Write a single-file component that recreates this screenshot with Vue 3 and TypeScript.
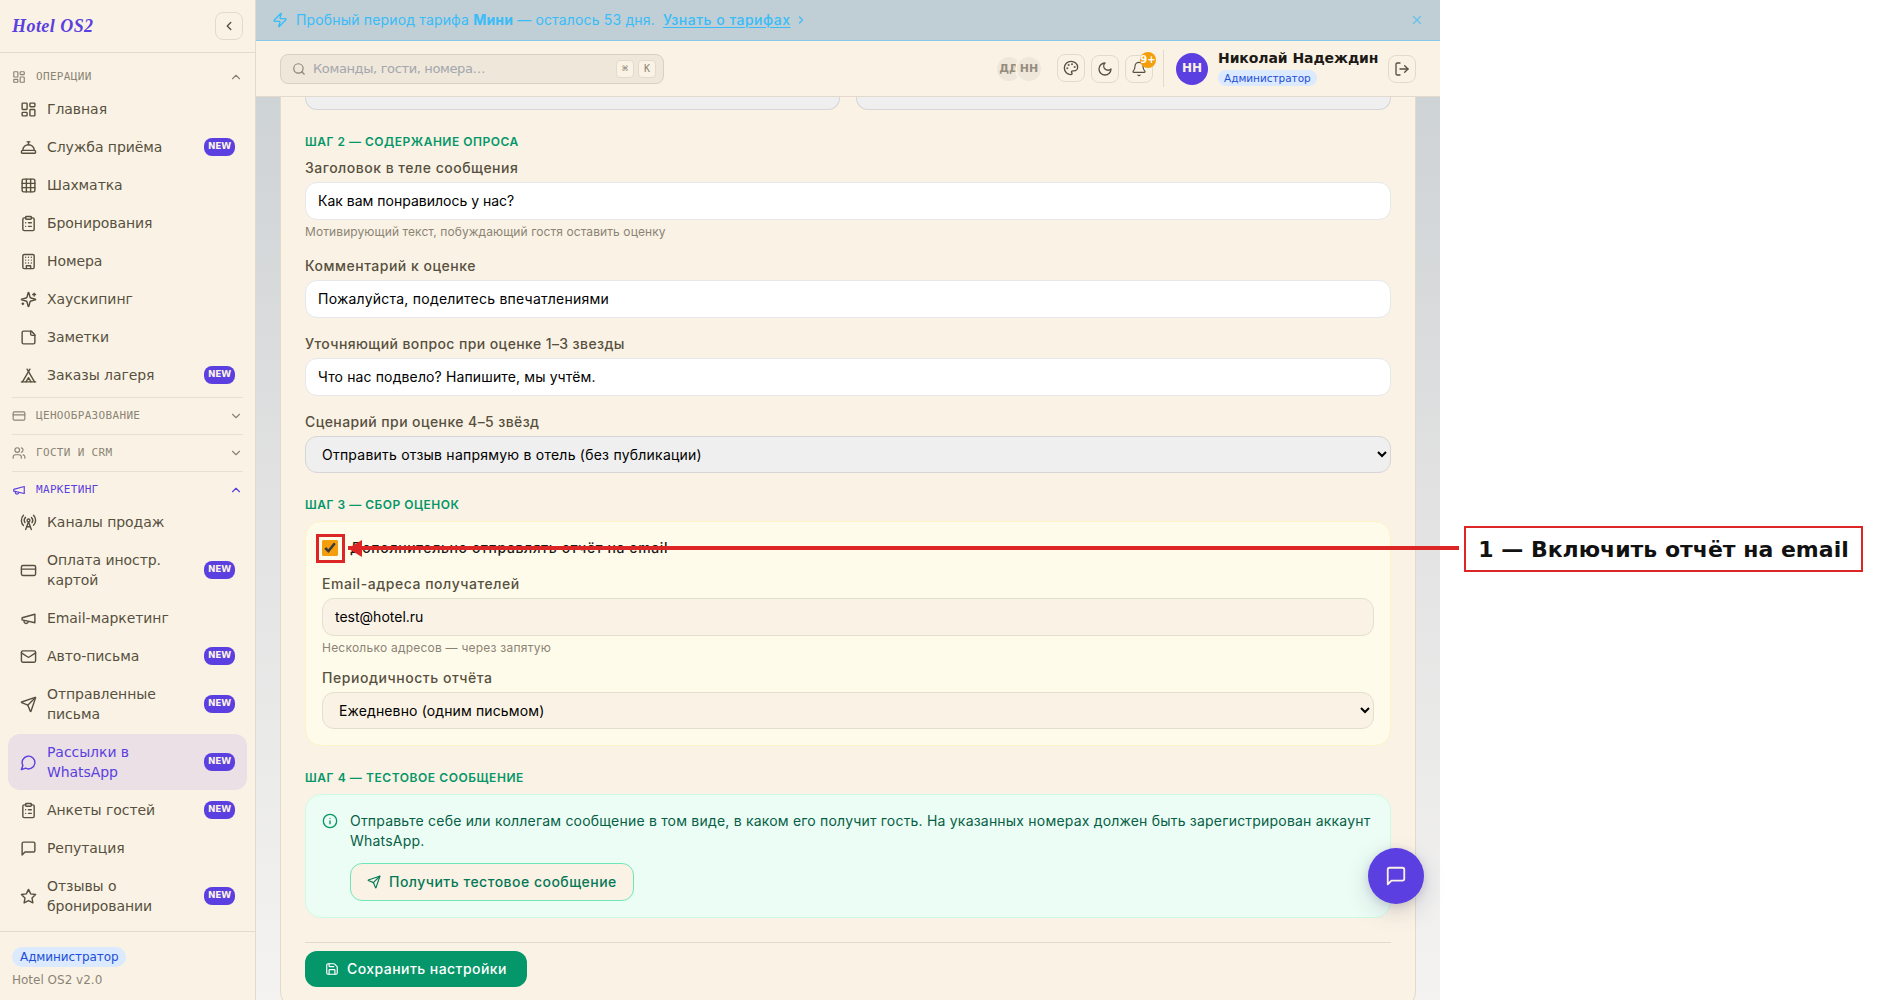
<script setup lang="ts">
import { ref } from 'vue'

interface NavItem {
  label: string
  icon: string
  isNew?: boolean
  active?: boolean
}
interface NavGroup {
  title: string
  icon: string
  open: boolean
  accent?: boolean
  items: NavItem[]
}

const icons: Record<string, string> = {
  dashboard:
    '<rect width="7" height="9" x="3" y="3" rx="1"/><rect width="7" height="5" x="14" y="3" rx="1"/><rect width="7" height="9" x="14" y="12" rx="1"/><rect width="7" height="5" x="3" y="16" rx="1"/>',
  bellDesk:
    '<path d="M3 20a1 1 0 0 1-1-1v-1a2 2 0 0 1 2-2h16a2 2 0 0 1 2 2v1a1 1 0 0 1-1 1Z"/><path d="M20 16a8 8 0 1 0-16 0"/><path d="M12 4v4"/><path d="M10 4h4"/>',
  grid:
    '<rect width="18" height="18" x="3" y="3" rx="2"/><path d="M3 9h18"/><path d="M3 15h18"/><path d="M9 3v18"/><path d="M15 3v18"/>',
  clipboard:
    '<rect width="8" height="4" x="8" y="2" rx="1" ry="1"/><path d="M16 4h2a2 2 0 0 1 2 2v14a2 2 0 0 1-2 2H6a2 2 0 0 1-2-2V6a2 2 0 0 1 2-2h2"/><path d="M12 11h4"/><path d="M12 16h4"/><path d="M8 11h.01"/><path d="M8 16h.01"/>',
  building:
    '<rect width="16" height="20" x="4" y="2" rx="2" ry="2"/><path d="M9 22v-4h6v4"/><path d="M8 6h.01"/><path d="M16 6h.01"/><path d="M12 6h.01"/><path d="M12 10h.01"/><path d="M12 14h.01"/><path d="M16 10h.01"/><path d="M16 14h.01"/><path d="M8 10h.01"/><path d="M8 14h.01"/>',
  sparkles:
    '<path d="M9.937 15.5A2 2 0 0 0 8.5 14.063l-6.135-1.582a.5.5 0 0 1 0-.962L8.5 9.936A2 2 0 0 0 9.937 8.5l1.582-6.135a.5.5 0 0 1 .963 0L14.063 8.5A2 2 0 0 0 15.5 9.937l6.135 1.581a.5.5 0 0 1 0 .964L15.5 14.063a2 2 0 0 0-1.437 1.437l-1.582 6.135a.5.5 0 0 1-.963 0z"/><path d="M20 3v4"/><path d="M22 5h-4"/><path d="M4 17v2"/><path d="M5 18H3"/>',
  note:
    '<path d="M16 3H5a2 2 0 0 0-2 2v14a2 2 0 0 0 2 2h14a2 2 0 0 0 2-2V8Z"/><path d="M15 3v4a2 2 0 0 0 2 2h4"/>',
  tent:
    '<path d="M3.5 21 14 3"/><path d="M20.5 21 10 3"/><path d="M15.5 21 12 15l-3.5 6"/><path d="M2 21h20"/>',
  card: '<rect width="20" height="14" x="2" y="5" rx="2"/><path d="M2 10h20"/>',
  users:
    '<path d="M16 21v-2a4 4 0 0 0-4-4H6a4 4 0 0 0-4 4v2"/><circle cx="9" cy="7" r="4"/><path d="M22 21v-2a4 4 0 0 0-3-3.87"/><path d="M16 3.13a4 4 0 0 1 0 7.75"/>',
  megaphone: '<path d="m3 11 18-5v12L3 14v-3z"/><path d="M11.6 16.8a3 3 0 1 1-5.8-1.6"/>',
  tower:
    '<path d="M4.9 16.1C1 12.2 1 5.8 4.9 1.9"/><path d="M7.8 4.7a6.14 6.14 0 0 0-.8 7.5"/><circle cx="12" cy="9" r="2"/><path d="M16.2 4.8c2 2 2.26 5.11.8 7.47"/><path d="M19.1 1.9a9.96 9.96 0 0 1 0 14.1"/><path d="M9.5 18h5"/><path d="m8 22 4-11 4 11"/>',
  mail: '<rect width="20" height="16" x="2" y="4" rx="2"/><path d="m22 7-8.97 5.7a1.94 1.94 0 0 1-2.06 0L2 7"/>',
  send: '<path d="M14.536 21.686a.5.5 0 0 0 .937-.024l6.5-19a.496.496 0 0 0-.635-.635l-19 6.5a.5.5 0 0 0-.024.937l7.93 3.18a2 2 0 0 1 1.112 1.11z"/><path d="m21.854 2.147-10.94 10.939"/>',
  bubble: '<path d="M7.9 20A9 9 0 1 0 4 16.1L2 22Z"/>',
  message: '<path d="M21 15a2 2 0 0 1-2 2H7l-4 4V5a2 2 0 0 1 2-2h14a2 2 0 0 1 2 2z"/>',
  star: '<path d="M12 2l3.09 6.26L22 9.27l-5 4.87 1.18 6.88L12 17.77l-6.18 3.25L7 14.14 2 9.27l6.91-1.01z"/>',
  up: '<path d="m18 15-6-6-6 6"/>',
  down: '<path d="m6 9 6 6 6-6"/>',
  left: '<path d="m15 18-6-6 6-6"/>',
  right: '<path d="m9 18 6-6-6-6"/>',
  zap: '<path d="M4 14a1 1 0 0 1-.78-1.63l9.9-10.2a.5.5 0 0 1 .86.46l-1.92 6.02A1 1 0 0 0 13 10h7a1 1 0 0 1 .78 1.63l-9.9 10.2a.5.5 0 0 1-.86-.46l1.92-6.02A1 1 0 0 0 11 14z"/>',
  close: '<path d="M18 6 6 18"/><path d="m6 6 12 12"/>',
  search: '<circle cx="11" cy="11" r="8"/><path d="m21 21-4.3-4.3"/>',
  palette:
    '<circle cx="13.5" cy="6.5" r=".5" fill="currentColor"/><circle cx="17.5" cy="10.5" r=".5" fill="currentColor"/><circle cx="8.5" cy="7.5" r=".5" fill="currentColor"/><circle cx="6.5" cy="12.5" r=".5" fill="currentColor"/><path d="M12 2C6.5 2 2 6.5 2 12s4.5 10 10 10c.926 0 1.648-.746 1.648-1.688 0-.437-.18-.835-.437-1.125-.29-.289-.438-.652-.438-1.125a1.64 1.64 0 0 1 1.668-1.668h1.996c3.051 0 5.555-2.503 5.555-5.554C21.965 6.012 17.461 2 12 2z"/>',
  moon: '<path d="M12 3a6 6 0 0 0 9 9 9 9 0 1 1-9-9Z"/>',
  bell: '<path d="M10.268 21a2 2 0 0 0 3.464 0"/><path d="M3.262 15.326A1 1 0 0 0 4 17h16a1 1 0 0 0 .74-1.673C19.41 13.956 18 12.499 18 8A6 6 0 0 0 6 8c0 4.499-1.411 5.956-2.738 7.326"/>',
  logout: '<path d="M9 21H5a2 2 0 0 1-2-2V5a2 2 0 0 1 2-2h4"/><path d="m16 17 5-5-5-5"/><path d="M21 12H9"/>',
  info: '<circle cx="12" cy="12" r="10"/><path d="M12 16v-4"/><path d="M12 8h.01"/>',
  save: '<path d="M15.2 3a2 2 0 0 1 1.4.6l3.8 3.8a2 2 0 0 1 .6 1.4V19a2 2 0 0 1-2 2H5a2 2 0 0 1-2-2V5a2 2 0 0 1 2-2z"/><path d="M17 21v-7a1 1 0 0 0-1-1H8a1 1 0 0 0-1 1v7"/><path d="M7 3v4a1 1 0 0 0 1 1h7"/>',
}

const groups: NavGroup[] = [
  {
    title: 'ОПЕРАЦИИ',
    icon: 'dashboard',
    open: true,
    items: [
      { label: 'Главная', icon: 'dashboard' },
      { label: 'Служба приёма', icon: 'bellDesk', isNew: true },
      { label: 'Шахматка', icon: 'grid' },
      { label: 'Бронирования', icon: 'clipboard' },
      { label: 'Номера', icon: 'building' },
      { label: 'Хаускипинг', icon: 'sparkles' },
      { label: 'Заметки', icon: 'note' },
      { label: 'Заказы лагеря', icon: 'tent', isNew: true },
    ],
  },
  { title: 'ЦЕНООБРАЗОВАНИЕ', icon: 'card', open: false, items: [] },
  { title: 'ГОСТИ И CRM', icon: 'users', open: false, items: [] },
  {
    title: 'МАРКЕТИНГ',
    icon: 'megaphone',
    open: true,
    accent: true,
    items: [
      { label: 'Каналы продаж', icon: 'tower' },
      { label: 'Оплата иностр. картой', icon: 'card', isNew: true },
      { label: 'Email-маркетинг', icon: 'megaphone' },
      { label: 'Авто-письма', icon: 'mail', isNew: true },
      { label: 'Отправленные письма', icon: 'send', isNew: true },
      { label: 'Рассылки в WhatsApp', icon: 'bubble', isNew: true, active: true },
      { label: 'Анкеты гостей', icon: 'clipboard', isNew: true },
      { label: 'Репутация', icon: 'message' },
      { label: 'Отзывы о бронировании', icon: 'star', isNew: true },
    ],
  },
]

const heading = ref('Как вам понравилось у нас?')
const comment = ref('Пожалуйста, поделитесь впечатлениями')
const question = ref('Что нас подвело? Напишите, мы учтём.')
const emails = ref('test@hotel.ru')
const sendReport = ref(true)
</script>

<template>
  <div class="page">
    <div class="app">
      <aside class="sidebar">
        <div class="brand">
          <span class="logo">Hotel OS2</span>
          <button class="icon-btn">
            <svg class="ic" width="14" height="14" viewBox="0 0 24 24" stroke-width="2.4" v-html="icons.left" />
          </button>
        </div>
        <nav class="nav">
          <section v-for="g in groups" :key="g.title" class="group" :class="{ closed: !g.open }">
            <div class="group-head" :class="{ accent: g.accent }">
              <svg class="ic" width="14" height="14" viewBox="0 0 24 24" stroke-width="2" v-html="icons[g.icon]" />
              <span class="group-title">{{ g.title }}</span>
              <svg class="ic" width="14" height="14" viewBox="0 0 24 24" stroke-width="2" v-html="g.open ? icons.up : icons.down" />
            </div>
            <a v-for="i in g.items" :key="i.label" class="item" :class="{ active: i.active }">
              <svg class="ic" width="17" height="17" viewBox="0 0 24 24" stroke-width="2" v-html="icons[i.icon]" />
              <span class="item-label">{{ i.label }}</span>
              <span v-if="i.isNew" class="new">NEW</span>
            </a>
          </section>
        </nav>
        <div class="side-foot">
          <span class="role-pill">Администратор</span>
          <span class="version">Hotel OS2 v2.0</span>
        </div>
      </aside>

      <div class="main">
        <div class="banner">
          <svg class="ic" width="16" height="16" viewBox="0 0 24 24" stroke-width="2" v-html="icons.zap" />
          <span class="banner-text">Пробный период тарифа <b>Мини</b> — осталось 53 дня.</span>
          <a class="banner-link">Узнать о тарифах</a>
          <svg class="ic banner-arrow" width="12" height="12" viewBox="0 0 24 24" stroke-width="2.4" v-html="icons.right" />
          <svg class="ic banner-close" width="14" height="14" viewBox="0 0 24 24" stroke-width="2" v-html="icons.close" />
        </div>

        <header class="topbar">
          <div class="search">
            <svg class="ic" width="14" height="14" viewBox="0 0 24 24" stroke-width="2" v-html="icons.search" />
            <span class="placeholder">Команды, гости, номера…</span>
            <kbd>⌘</kbd>
            <kbd>K</kbd>
          </div>
          <div class="presence">
            <span class="mini">ДД</span>
            <span class="mini">НН</span>
          </div>
          <button class="icon-btn raised">
            <svg class="ic" width="16" height="16" viewBox="0 0 24 24" stroke-width="2" v-html="icons.palette" />
          </button>
          <button class="icon-btn">
            <svg class="ic" width="16" height="16" viewBox="0 0 24 24" stroke-width="2" v-html="icons.moon" />
          </button>
          <button class="icon-btn bell">
            <svg class="ic" width="16" height="16" viewBox="0 0 24 24" stroke-width="1.75" v-html="icons.bell" />
            <span class="count">9+</span>
          </button>
          <span class="divider" />
          <span class="avatar">НН</span>
          <div class="who">
            <span class="name">Николай Надеждин</span>
            <span class="role-pill small">Администратор</span>
          </div>
          <button class="icon-btn">
            <svg class="ic" width="16" height="16" viewBox="0 0 24 24" stroke-width="2" v-html="icons.logout" />
          </button>
        </header>

        <div class="content">
          <div class="card">
            <div class="cut-row">
              <div class="cut" />
              <div class="cut" />
            </div>

            <h3>ШАГ 2 — СОДЕРЖАНИЕ ОПРОСА</h3>
            <div class="field">
              <label>Заголовок в теле сообщения</label>
              <input v-model="heading" type="text" />
              <p class="hint">Мотивирующий текст, побуждающий гостя оставить оценку</p>
            </div>
            <div class="field">
              <label>Комментарий к оценке</label>
              <input v-model="comment" type="text" class="airy" />
            </div>
            <div class="field">
              <label class="snug">Уточняющий вопрос при оценке 1–3 звезды</label>
              <input v-model="question" type="text" class="open" />
            </div>
            <div class="field">
              <label class="snug">Сценарий при оценке 4–5 звёзд</label>
              <select class="airy">
                <option>Отправить отзыв напрямую в отель (без публикации)</option>
              </select>
            </div>

            <h3>ШАГ 3 — СБОР ОЦЕНОК</h3>
            <div class="box yellow">
              <label class="check">
                <input v-model="sendReport" type="checkbox" />
                <span>Дополнительно отправлять отчёт на email</span>
              </label>
              <div class="field tight">
                <label class="wide">Email-адреса получателей</label>
                <input v-model="emails" type="text" class="cream" />
                <p class="hint airy">Несколько адресов — через запятую</p>
              </div>
              <div class="field">
                <label class="wide">Периодичность отчёта</label>
                <select class="cream open">
                  <option>Ежедневно (одним письмом)</option>
                </select>
              </div>
            </div>

            <h3 class="last">ШАГ 4 — ТЕСТОВОЕ СООБЩЕНИЕ</h3>
            <div class="box green">
              <svg class="ic info" width="16" height="16" viewBox="0 0 24 24" stroke-width="2" v-html="icons.info" />
              <div class="green-body">
                <p>
                  Отправьте себе или коллегам сообщение в том виде, в каком его получит гость. На указанных номерах
                  должен быть зарегистрирован аккаунт WhatsApp.
                </p>
                <button class="test-btn">
                  <svg class="ic" width="14" height="14" viewBox="0 0 24 24" stroke-width="2" v-html="icons.send" />
                  <span>Получить тестовое сообщение</span>
                </button>
              </div>
            </div>

            <div class="actions">
              <button class="save-btn">
                <svg class="ic" width="14" height="14" viewBox="0 0 24 24" stroke-width="2" v-html="icons.save" />
                <span>Сохранить настройки</span>
              </button>
            </div>
          </div>
        </div>
      </div>
    </div>

    <button class="fab">
      <svg class="ic" width="22" height="22" viewBox="0 0 24 24" stroke-width="2" v-html="icons.message" />
    </button>

    <div class="mark" />
    <svg class="arrow" width="1111" height="18" viewBox="0 0 1111 18">
      <rect x="0" y="6" width="1111" height="4" />
      <path d="M0 8.5 14 0v17z" />
    </svg>
    <div class="callout">1 — Включить отчёт на email</div>
  </div>
</template>

<style>
body {
  margin: 0;
  background: #fff;
}
</style>

<style scoped>
* {
  box-sizing: border-box;
}
.page {
  position: relative;
  width: 1886px;
  height: 1000px;
  overflow: hidden;
  background: #fff;
  font-family: 'DejaVu Sans', sans-serif;
  color: #1c1917;
}
.app {
  display: flex;
  width: 1440px;
  height: 1000px;
}
.ic {
  display: block;
  flex: none;
  fill: none;
  stroke: currentColor;
  stroke-linecap: round;
  stroke-linejoin: round;
}
button {
  font: inherit;
  padding: 0;
  margin: 0;
}

/* sidebar */
.sidebar {
  display: flex;
  flex-direction: column;
  width: 256px;
  flex: none;
  background: #faf3e5;
  border-right: 1px solid #e3dacd;
}
.brand {
  display: flex;
  align-items: center;
  justify-content: space-between;
  height: 53px;
  padding: 0 12px;
  border-bottom: 1px solid #e3dacd;
}
.logo {
  font: italic bold 18px/28px 'Liberation Serif', serif;
  letter-spacing: 0.45px;
  color: #5b3fe0;
}
.icon-btn {
  position: relative;
  display: flex;
  align-items: center;
  justify-content: center;
  width: 28px;
  height: 28px;
  flex: none;
  border: 1px solid #e3dacd;
  border-radius: 8px;
  background: transparent;
  color: #57503f;
}
.nav {
  flex: 1;
  padding-top: 6px;
}
.group {
  padding: 3px 0;
}
.group + .group::before {
  content: '';
  display: block;
  height: 1px;
  margin: -3px 12px 3px;
  background: #e9e0d3;
}
.group.closed {
  padding-bottom: 5px;
}
.group-head {
  display: flex;
  align-items: center;
  gap: 10px;
  height: 28px;
  padding: 1px 12px 0;
  color: #8b8475;
}
.group-head.accent {
  color: #5b3fe0;
}
.group-title {
  flex: 1;
  font: 11px/16px 'DejaVu Sans Mono', monospace;
  letter-spacing: 0.33px;
}
.item {
  display: flex;
  align-items: center;
  gap: 10px;
  margin: 1px 8px;
  padding: 8px 12px;
  border-radius: 12px;
  color: #57503f;
  font-size: 14px;
  line-height: 20px;
  letter-spacing: -0.07px;
}
.item + .item {
  margin-top: 2px;
}
.item-label {
  flex: 1;
}
.item.active {
  background: #eae0e5;
  color: #5b3fe0;
}
.new {
  flex: none;
  width: 31px;
  height: 18px;
  border-radius: 8px;
  background: #5b3fe0;
  color: #faf3e5;
  font-size: 9px;
  line-height: 16px;
  font-weight: 700;
  letter-spacing: -0.15px;
  text-align: center;
}
.side-foot {
  display: flex;
  flex-direction: column;
  align-items: flex-start;
  height: 69px;
  padding: 15px 12px 0;
  border-top: 1px solid #e3dacd;
}
.role-pill {
  padding: 0 8px;
  border-radius: 10px;
  background: #dbeafe;
  color: #1d4ed8;
  font-size: 12px;
  line-height: 20px;
  letter-spacing: -0.08px;
}
.role-pill.small {
  padding: 0 6px;
  font-size: 10.5px;
  line-height: 16px;
  letter-spacing: -0.03px;
}
.version {
  margin-top: 5px;
  font-size: 12px;
  line-height: 16px;
  color: #8b8475;
}

/* main column */
.main {
  display: flex;
  flex-direction: column;
  width: 1184px;
  background: linear-gradient(#c9cfd2 0, #ced3d5 100px, #e1e1e1 480px, #f4f3f2 1000px);
}
.banner {
  display: flex;
  align-items: center;
  height: 41px;
  flex: none;
  padding: 0 16px 1px;
  border-bottom: 1px solid #87c9e6;
  background: #c0ced5;
  color: #38bdf8;
  font: 14px/20px Inter, sans-serif;
}
.banner-text {
  margin-left: 8px;
  letter-spacing: 0.16px;
}
.banner-link {
  margin-left: 8px;
  font-weight: 500;
  letter-spacing: 0.49px;
  text-decoration: underline;
  text-underline-offset: 2px;
}
.banner-arrow {
  margin-left: 4px;
}
.banner-close {
  margin-left: auto;
  opacity: 0.7;
}
.topbar {
  display: flex;
  align-items: center;
  height: 56px;
  flex: none;
  padding: 0 24px;
  background: #faf3e5;
  border-bottom: 1px solid #e3dacd;
}
.search {
  display: flex;
  align-items: center;
  width: 384px;
  height: 30px;
  padding: 0 7px 0 11px;
  border: 1px solid #dad1c4;
  border-radius: 8px;
  background: #efe7da;
  color: #8b8475;
}
.placeholder {
  flex: 1;
  margin-left: 7px;
  font-size: 13px;
  letter-spacing: -0.37px;
  color: #a3a6ad;
}
kbd {
  width: 18px;
  height: 18px;
  margin-left: 4px;
  border: 1px solid #e3dacd;
  border-radius: 4px;
  background: #faf3e5;
  font: 10px/16px 'DejaVu Sans Mono', monospace;
  text-align: center;
  color: #8b8475;
}
.presence {
  display: flex;
  margin-left: auto;
  margin-right: 14px;
}
.mini {
  width: 28px;
  height: 28px;
  border: 2px solid #faf3e5;
  border-radius: 50%;
  background: #efe7da;
  color: #948d80;
  font-size: 11px;
  font-weight: 700;
  line-height: 23px;
  text-align: center;
}
.mini + .mini {
  margin-left: -8px;
}
.topbar .icon-btn + .icon-btn {
  margin-left: 6px;
}
.raised {
  margin-bottom: 2px;
}
.count {
  position: absolute;
  top: -4px;
  right: -4px;
  width: 16px;
  height: 16px;
  border-radius: 50%;
  background: #f59e0b;
  color: #fff;
  display: flex;
  justify-content: center;
  font-size: 10px;
  font-weight: 700;
  line-height: 15px;
}
.divider {
  width: 1px;
  height: 37px;
  margin: 0 12px 0 10px;
  background: #e3dacd;
}
.avatar {
  width: 32px;
  height: 32px;
  border-radius: 50%;
  background: #5b3fe0;
  color: #faf3e5;
  font-size: 12px;
  font-weight: 700;
  line-height: 31px;
  text-align: center;
}
.who {
  display: flex;
  flex-direction: column;
  align-items: flex-start;
  margin: 0 10px;
  padding-bottom: 2px;
  width: 160px;
  white-space: nowrap;
}
.name {
  font-size: 14px;
  font-weight: 700;
  line-height: 18px;
  margin-bottom: 3px;
  letter-spacing: -0.08px;
}

/* form */
.content {
  flex: 1;
  min-height: 0;
  padding: 0 24px;
  font-family: Inter, sans-serif;
}
.card {
  height: 911px;
  padding: 0 24px;
  border: 1px solid #e3dacd;
  border-top: 0;
  border-radius: 0 0 16px 16px;
  background: #faf3e5;
}
.cut-row {
  display: flex;
  gap: 16px;
}
.cut {
  flex: 1;
  height: 13px;
  border: 1px solid #d6d6d8;
  border-top: 0;
  border-radius: 0 0 12px 12px;
  background: #efefef;
}
h3 {
  margin: 24px 0 8px;
  font-size: 12px;
  line-height: 16px;
  font-weight: 600;
  letter-spacing: 0.5px;
  color: #059669;
}
h3.last {
  letter-spacing: 0.56px;
}
.field {
  display: flex;
  flex-direction: column;
}
.field + .field {
  margin-top: 16px;
}
.field.tight + .field {
  margin-top: 12px;
}
.field label {
  margin-bottom: 4px;
  font-size: 14px;
  line-height: 20px;
  font-weight: 500;
  letter-spacing: 0.5px;
  color: #57503f;
}
.field label.snug {
  letter-spacing: 0.4px;
}
.field label.wide {
  letter-spacing: 0.55px;
}
.field input,
.field select {
  width: 100%;
  margin: 0;
  border-radius: 12px;
  font: 14px Inter, sans-serif;
  color: #000;
  outline: 0;
}
.field input {
  height: 38px;
  padding: 0 12px 2px;
  border: 1px solid #e5e7eb;
  background: #fff;
}
.field select {
  height: 37px;
  padding: 0 12px;
  border: 1px solid #d6d6d8;
  background-color: #efefef;
}
.field input.cream,
.field select.cream {
  border-color: #e3dfcf;
  background-color: #faf3e5;
}
.field .open {
  letter-spacing: 0.13px;
}
.field .airy {
  letter-spacing: 0.23px;
}
.hint {
  margin: 4px 0 0;
  font-size: 12px;
  line-height: 16px;
  letter-spacing: 0.09px;
  color: #8b8475;
}
.box {
  padding: 16px;
  border: 1px solid;
  border-radius: 16px;
}
.yellow {
  border-color: #fef3c7;
  background: #fffbeb;
}
.check {
  display: flex;
  align-items: center;
  gap: 12px;
  height: 20px;
  margin-bottom: 16px;
  font-size: 14px;
  line-height: 20px;
  font-weight: 500;
  letter-spacing: 0.61px;
  color: #1c1917;
}
.check input {
  width: 16px;
  height: 16px;
  margin: 0;
  accent-color: #f59e0b;
}
.green {
  display: flex;
  gap: 12px;
  border-color: #d1fae5;
  background: #ecfdf5;
}
.info {
  margin-top: 2px;
  color: #059669;
}
.green-body p {
  margin: 0 0 12px;
  font-size: 14px;
  line-height: 20px;
  letter-spacing: 0.2px;
  color: #065f46;
}
.test-btn {
  display: flex;
  align-items: center;
  gap: 8px;
  height: 38px;
  padding: 0 16px;
  border: 1px solid #6ee7b7;
  border-radius: 12px;
  background: #faf3e5;
  color: #047857;
  font-size: 14px;
  font-weight: 500;
  letter-spacing: 0.49px;
}
.test-btn span,
.save-btn span {
  padding-bottom: 2px;
}
.actions {
  margin-top: 24px;
  padding-top: 8px;
  border-top: 1px solid #e3dacd;
}
.save-btn {
  display: flex;
  align-items: center;
  gap: 8px;
  height: 36px;
  padding: 0 20px;
  border: 0;
  border-radius: 12px;
  background: #059669;
  color: #fff;
  font-size: 14px;
  font-weight: 500;
  letter-spacing: 0.44px;
}

/* floating chat button */
.fab {
  position: absolute;
  left: 1368px;
  top: 848px;
  width: 56px;
  height: 56px;
  display: flex;
  align-items: center;
  justify-content: center;
  border: 0;
  border-radius: 50%;
  background: #5b3fe0;
  color: #faf3e5;
  box-shadow: 0 8px 24px rgba(40, 30, 90, 0.16), 0 2px 8px rgba(40, 30, 90, 0.15);
}

/* annotation layer */
.mark {
  position: absolute;
  left: 316px;
  top: 534px;
  width: 29px;
  height: 29px;
  border: 3px solid #dc2626;
}
.arrow {
  position: absolute;
  left: 348px;
  top: 540px;
  fill: #dc2626;
}
.callout {
  position: absolute;
  left: 1464px;
  top: 526px;
  width: 399px;
  height: 46px;
  border: 2px solid #dc2626;
  background: #fff;
  color: #111;
  font-size: 22px;
  font-weight: 700;
  line-height: 43px;
  text-align: center;
  white-space: nowrap;
}
</style>
